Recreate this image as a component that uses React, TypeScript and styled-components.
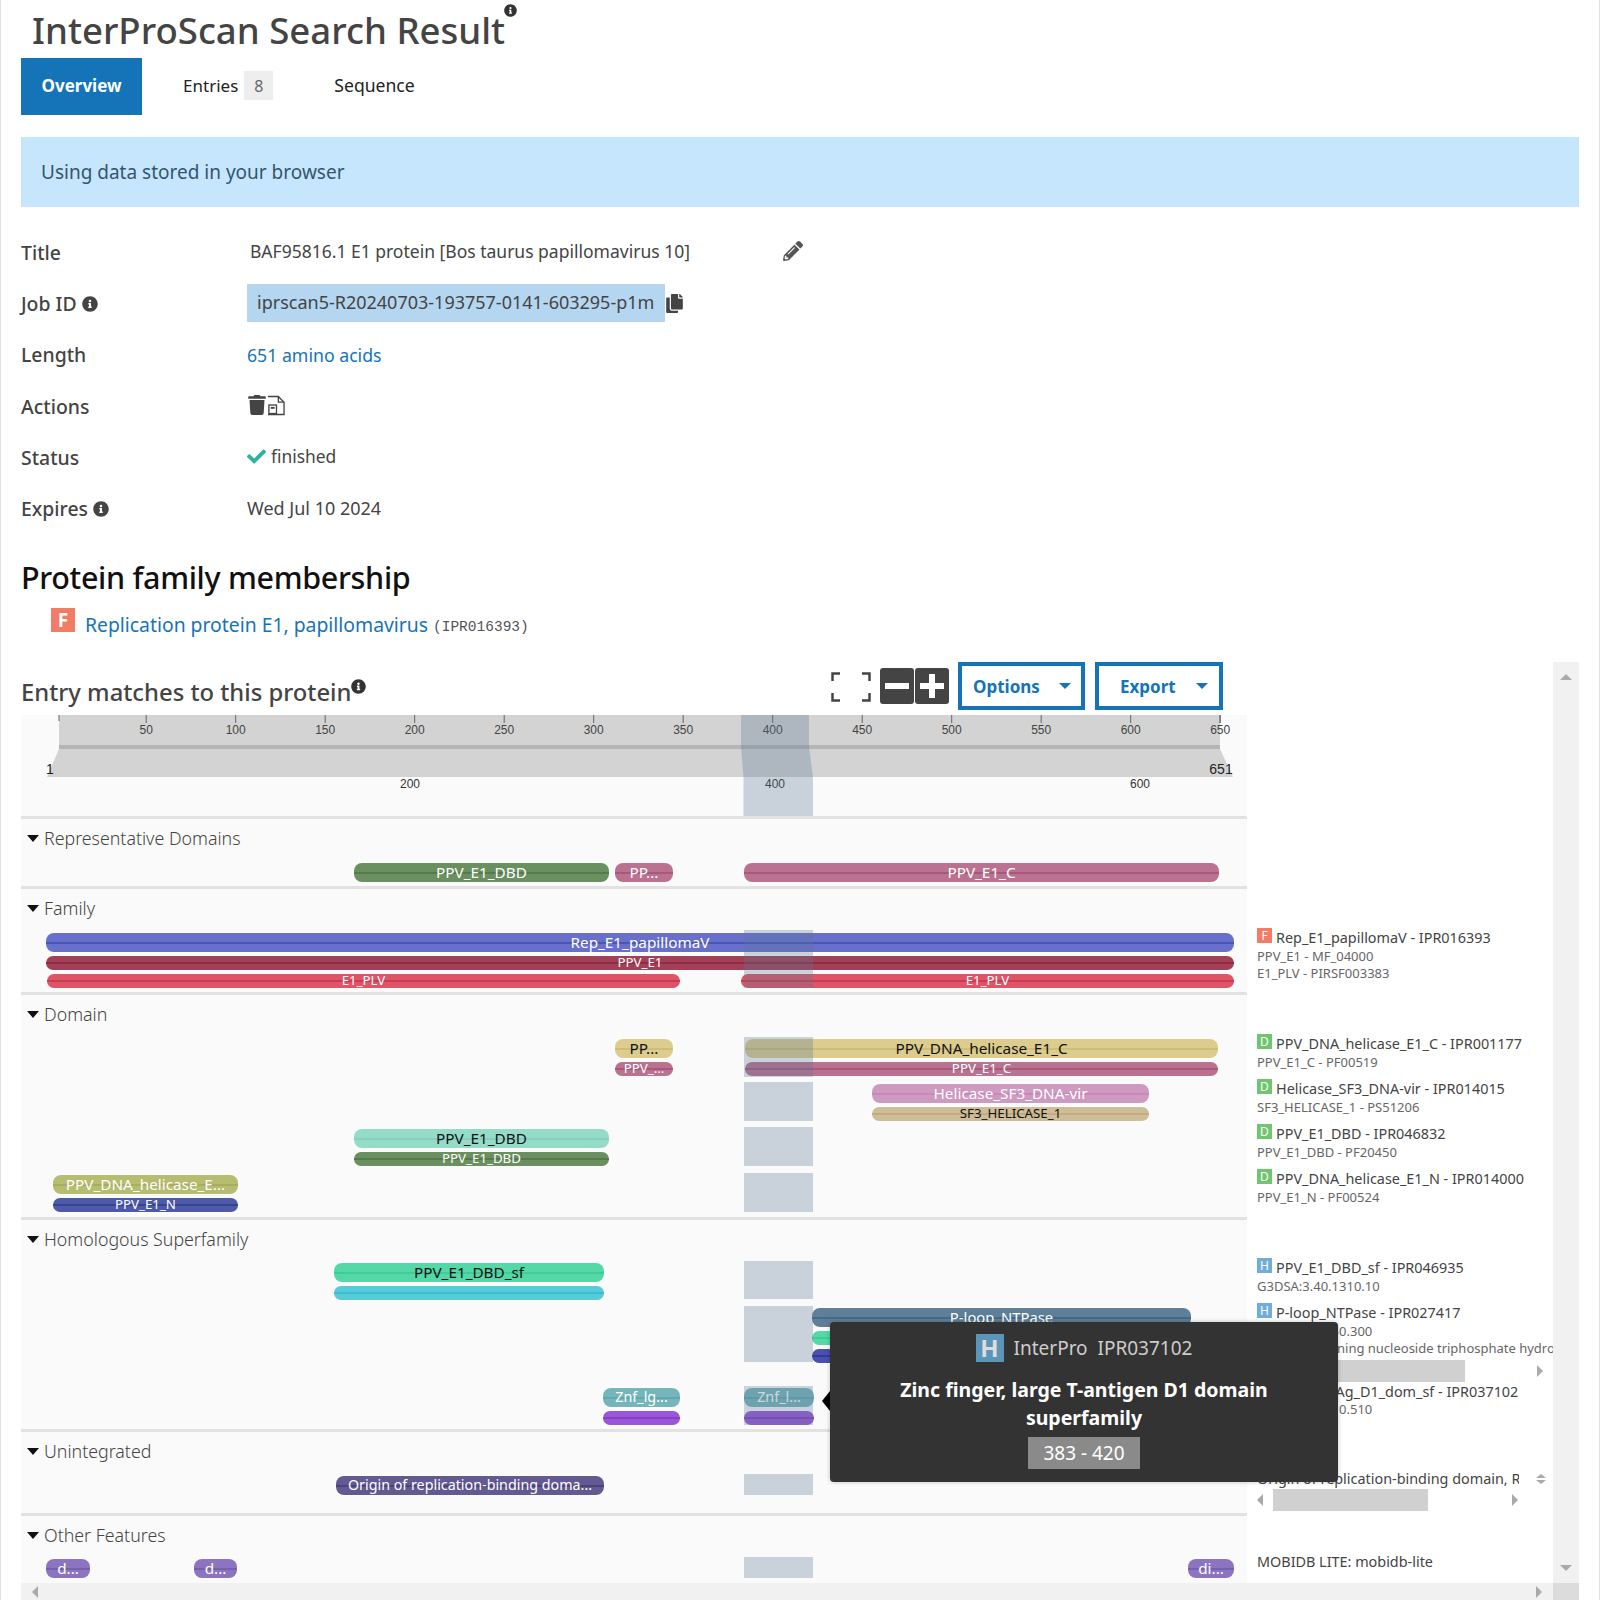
import React from 'react';
import { FaCheck, FaCopy, FaInfoCircle, FaPencilAlt, FaTrash } from 'react-icons/fa';
import styled, { createGlobalStyle } from 'styled-components';

const GlobalStyle = createGlobalStyle`
  html, body {
    margin: 0;
    padding: 0;
    background: #fff;
    overflow: hidden;
  }
  * {
    box-sizing: border-box;
  }
  body {
    font-family: 'Noto Sans', 'Open Sans', sans-serif;
    color: #444;
  }
`;

interface BarData {
  x0: number;
  x1: number;
  y: number;
  small?: boolean;
  color: string;
  line: string;
  text?: string;
  dark?: boolean;
  size?: number;
}

interface LabelData {
  badge?: string;
  lines: string[];
  scroll?: { left: number; width: number; total: number; gap: number; after: number; leftArrow?: boolean };
  stepper?: boolean;
}

interface SectionData {
  name: string;
  top: number;
  height: number;
  padTop: number;
  last?: boolean;
  bars: BarData[];
  blocks: [number, number][];
  labels: LabelData[];
}

const GREEN = { color: '#6a9060', line: '#557a4c' };
const ROSE = { color: '#bb7290', line: '#a8587a' };
const SAND = { color: '#dccd8e', line: '#cfbd78' };

const sections: SectionData[] = [
  {
    name: 'Representative Domains',
    top: 819,
    height: 70,
    padTop: 0,
    blocks: [],
    labels: [],
    bars: [
      { x0: 354, x1: 609, y: 862, ...GREEN, text: 'PPV_E1_DBD' },
      { x0: 615, x1: 673, y: 862, ...ROSE, text: 'PP...' },
      { x0: 744, x1: 1219, y: 862, ...ROSE, text: 'PPV_E1_C' },
    ],
  },
  {
    name: 'Family',
    top: 889,
    height: 106,
    padTop: 40,
    blocks: [[929, 987]],
    bars: [
      { x0: 46, x1: 1234, y: 932, color: '#6870cc', line: '#4a55bb', text: 'Rep_E1_papillomaV' },
      { x0: 46, x1: 1234, y: 955, small: true, color: '#a34058', line: '#8e2c46', text: 'PPV_E1' },
      { x0: 47, x1: 680, y: 973, small: true, color: '#dd5566', line: '#cc3c50', text: 'E1_PLV' },
      { x0: 741, x1: 1234, y: 973, small: true, color: '#dd5566', line: '#cc3c50', text: 'E1_PLV' },
    ],
    labels: [{ badge: 'F', lines: ['Rep_E1_papillomaV - IPR016393', 'PPV_E1 - MF_04000', 'E1_PLV - PIRSF003383'] }],
  },
  {
    name: 'Domain',
    top: 995,
    height: 225,
    padTop: 40,
    blocks: [[1036, 1076], [1081, 1120], [1126, 1165], [1172, 1211]],
    bars: [
      { x0: 615, x1: 673, y: 1038, ...SAND, text: 'PP...', dark: true },
      { x0: 615, x1: 673, y: 1061, small: true, ...ROSE, text: 'PPV_...' },
      { x0: 745, x1: 1218, y: 1038, ...SAND, text: 'PPV_DNA_helicase_E1_C', dark: true },
      { x0: 745, x1: 1218, y: 1061, small: true, ...ROSE, text: 'PPV_E1_C' },
      { x0: 872, x1: 1149, y: 1083, color: '#cf9ac2', line: '#c58ab6', text: 'Helicase_SF3_DNA-vir' },
      { x0: 872, x1: 1149, y: 1106, small: true, color: '#cfbd97', line: '#c2ad82', text: 'SF3_HELICASE_1', dark: true },
      { x0: 354, x1: 609, y: 1128, color: '#94dcc8', line: '#85d2bc', text: 'PPV_E1_DBD', dark: true },
      { x0: 354, x1: 609, y: 1151, small: true, ...GREEN, text: 'PPV_E1_DBD' },
      { x0: 53, x1: 238, y: 1174, color: '#b6bc70', line: '#a8ae5e', text: 'PPV_DNA_helicase_E...' },
      { x0: 53, x1: 238, y: 1197, small: true, color: '#4c5aa8', line: '#344394', text: 'PPV_E1_N' },
    ],
    labels: [
      { badge: 'D', lines: ['PPV_DNA_helicase_E1_C - IPR001177', 'PPV_E1_C - PF00519'] },
      { badge: 'D', lines: ['Helicase_SF3_DNA-vir - IPR014015', 'SF3_HELICASE_1 - PS51206'] },
      { badge: 'D', lines: ['PPV_E1_DBD - IPR046832', 'PPV_E1_DBD - PF20450'] },
      { badge: 'D', lines: ['PPV_DNA_helicase_E1_N - IPR014000', 'PPV_E1_N - PF00524'] },
    ],
  },
  {
    name: 'Homologous Superfamily',
    top: 1220,
    height: 212,
    padTop: 39,
    blocks: [[1260, 1298], [1305, 1361], [1385, 1424]],
    bars: [
      { x0: 334, x1: 604, y: 1262, color: '#55d8a8', line: '#42cc98', text: 'PPV_E1_DBD_sf', dark: true },
      { x0: 334, x1: 604, y: 1285, small: true, color: '#55ccd8', line: '#3cbed0' },
      { x0: 812, x1: 1191, y: 1307, color: '#5f7f99', line: '#446a88', text: 'P-loop_NTPase', size: 14.8 },
      { x0: 812, x1: 1000, y: 1330, small: true, color: '#55d8a8', line: '#42cc98' },
      { x0: 812, x1: 1000, y: 1348, small: true, color: '#4a50b0', line: '#343a9c' },
      { x0: 603, x1: 680, y: 1387, color: '#74b6bc', line: '#62a8ae', text: 'Znf_lg...', size: 14.4 },
      { x0: 603, x1: 680, y: 1410, small: true, color: '#9a55d8', line: '#8440c8' },
      { x0: 744, x1: 814, y: 1387, color: '#74b6bc', line: '#62a8ae', text: 'Znf_l...', size: 14.4 },
      { x0: 744, x1: 814, y: 1410, small: true, color: '#9a55d8', line: '#8440c8' },
    ],
    labels: [
      { badge: 'H', lines: ['PPV_E1_DBD_sf - IPR046935', 'G3DSA:3.40.1310.10'] },
      {
        badge: 'H',
        lines: ['P-loop_NTPase - IPR027417', 'G3DSA:3.40.50.300', 'P-loop containing nucleoside triphosphate hydrolase - SSF52540'],
        scroll: { left: 16, width: 192, total: 286, gap: 3, after: -9 },
      },
      { badge: 'H', lines: ['Znf_lg_T-Ag_D1_dom_sf - IPR037102', 'G3DSA:1.10.10.510'] },
    ],
  },
  {
    name: 'Unintegrated',
    top: 1432,
    height: 84,
    padTop: 38,
    blocks: [[1473, 1494]],
    bars: [
      { x0: 336, x1: 604, y: 1475, color: '#635a92', line: '#4c437e', text: 'Origin of replication-binding doma...', size: 14.3 },
    ],
    labels: [
      {
        lines: ['Origin of replication-binding domain, RBD-like'],
        stepper: true,
        scroll: { left: 16, width: 155, total: 261, gap: 1, after: 0, leftArrow: true },
      },
    ],
  },
  {
    name: 'Other Features',
    top: 1516,
    height: 67,
    padTop: 37,
    last: true,
    blocks: [[1556, 1577]],
    bars: [
      { x0: 46, x1: 90, y: 1558, color: '#8c74c0', line: '#7860ae', text: 'd...' },
      { x0: 194, x1: 237, y: 1558, color: '#8c74c0', line: '#7860ae', text: 'd...' },
      { x0: 1188, x1: 1234, y: 1558, color: '#8c74c0', line: '#7860ae', text: 'di...' },
    ],
    labels: [{ lines: ['MOBIDB LITE: mobidb-lite'] }],
  },
];

const rulerTicks = [50, 100, 150, 200, 250, 300, 350, 400, 450, 500, 550, 600, 650];

const Ruler = () => (
  <RulerBox>
    <svg width="1226" height="101" viewBox="0 0 1226 101">
      <rect x="38" y="0" width="1161" height="33" fill="#d3d3d3" />
      <rect x="38" y="30" width="1161" height="4" fill="#b5b5b5" />
      <path d="M38 34H1199L1212 62H26Z" fill="#d3d3d3" />
      {rulerTicks.map(n => {
        const x = 35.7 + n * 1.79;
        return (
          <g key={n}>
            <line x1={x} x2={x} y1="0" y2="8" stroke="#666" />
            <text x={x} y="19" textAnchor="middle" fontSize="12" fontFamily="Liberation Sans" fill="#444">
              {n}
            </text>
          </g>
        );
      })}
      <line x1="38" x2="38" y1="0" y2="6" stroke="#666" />
      <line x1="1199" x2="1199" y1="0" y2="8" stroke="#666" />
      <text x="29" y="59" textAnchor="middle" fontSize="14" fontFamily="Liberation Sans" fill="#222">
        1
      </text>
      <text x="1200" y="59" textAnchor="middle" fontSize="14" fontFamily="Liberation Sans" fill="#222">
        651
      </text>
      <text x="389" y="73" textAnchor="middle" fontSize="12" fontFamily="Liberation Sans" fill="#333">
        200
      </text>
      <text x="754" y="73" textAnchor="middle" fontSize="12" fontFamily="Liberation Sans" fill="#333">
        400
      </text>
      <text x="1119" y="73" textAnchor="middle" fontSize="12" fontFamily="Liberation Sans" fill="#333">
        600
      </text>
      <path d="M720 0H788V32L792 62V101H722.5V62L720 32Z" fill="rgba(90,120,145,.3)" />
    </svg>
  </RulerBox>
);

const Track = ({ section }: { section: SectionData }) => (
  <SectionRow $height={section.height}>
    <TrackCell $last={section.last}>
      <SectionName>
        <Caret />
        {section.name}
      </SectionName>
      {section.bars.map((b, i) => (
        <Bar
          key={i}
          $left={b.x0 - 21}
          $top={b.y - section.top + 1}
          $width={b.x1 - b.x0}
          $small={b.small}
          $color={b.color}
          $line={b.line}
          $dark={b.dark}
          $size={b.size}
        >
          <span>{b.text}</span>
        </Bar>
      ))}
      {section.blocks.map(([y0, y1]) => (
        <Block key={y0} $top={y0 - section.top + 1} $height={y1 - y0} />
      ))}
    </TrackCell>
    <LabelCell $padTop={section.padTop}>
      {section.labels.map((l, i) => (
        <LabelGroup key={i}>
          {l.lines.map((line, j) =>
            j === 0 ? (
              <MainLine key={j}>
                {l.badge && <Badge $type={l.badge}>{l.badge}</Badge>}
                <LineText $stepper={l.stepper}>{line}</LineText>
                {l.stepper && (
                  <Stepper>
                    <ArrowUp />
                    <ArrowDown />
                  </Stepper>
                )}
              </MainLine>
            ) : (
              <SubLine key={j}>{line}</SubLine>
            ),
          )}
          {l.scroll && (
            <LabelScroll $total={l.scroll.total} $gap={l.scroll.gap} $after={l.scroll.after}>
              <ArrowLeft $hide={!l.scroll.leftArrow} />
              <Thumb $left={l.scroll.left - 6} $width={l.scroll.width} />
              <ArrowRight />
            </LabelScroll>
          )}
        </LabelGroup>
      ))}
    </LabelCell>
  </SectionRow>
);

const App = () => {
  return (
    <Shell>
      <GlobalStyle />
      <PageTitle>
        InterProScan Search Result
        <TitleInfo />
      </PageTitle>
      <Tabs>
        <Tab $active>Overview</Tab>
        <EntriesTab>
          Entries <Count>8</Count>
        </EntriesTab>
        <SequenceTab>Sequence</SequenceTab>
      </Tabs>
      <Callout>Using data stored in your browser</Callout>
      <MetaGrid>
        <MetaRow>
          <MetaLabel>Title</MetaLabel>
          <TitleValue>
            <span>BAF95816.1 E1 protein [Bos taurus papillomavirus 10]</span>
            <PencilIcon />
          </TitleValue>
        </MetaRow>
        <MetaRow>
          <MetaLabel>
            Job ID <SmallInfo />
          </MetaLabel>
          <JobRow>
            <JobBox>iprscan5-R20240703-193757-0141-603295-p1m</JobBox>
            <CopyIcon />
          </JobRow>
        </MetaRow>
        <MetaRow>
          <MetaLabel>Length</MetaLabel>
          <LinkText>651 amino acids</LinkText>
        </MetaRow>
        <MetaRow>
          <MetaLabel>Actions</MetaLabel>
          <ActionIcons>
            <TrashIcon />
            <svg width="18" height="21" viewBox="0 0 19 21" fill="none" stroke="#444" strokeWidth="1.4">
              <path d="M1 1h11l6 6v13H1" />
              <path d="M12 1v6h6" />
              <rect x="2" y="10" width="8" height="9" fill="#fff" />
              <rect x="4" y="12" width="4" height="2" fill="#444" stroke="none" />
            </svg>
          </ActionIcons>
        </MetaRow>
        <MetaRow>
          <MetaLabel>Status</MetaLabel>
          <StatusRow>
            <CheckIcon />
            <span>finished</span>
          </StatusRow>
        </MetaRow>
        <MetaRow>
          <MetaLabel>
            Expires <SmallInfo />
          </MetaLabel>
          <ExpiresValue>Wed Jul 10 2024</ExpiresValue>
        </MetaRow>
      </MetaGrid>
      <SectionTitle>Protein family membership</SectionTitle>
      <FamilyRow>
        <FamilyBadge>F</FamilyBadge>
        <FamilyLink>Replication protein E1, papillomavirus</FamilyLink>
        <Accession>(IPR016393)</Accession>
      </FamilyRow>
      <Viewer>
        <ViewerBody>
          <ChartColumn>
            <Toolbar>
              <EntryTitle>
                Entry matches to this protein
                <SupInfo />
              </EntryTitle>
              <Controls>
                <FullscreenIcon width="40" height="30" viewBox="0 0 40 30" fill="none" stroke="#444" strokeWidth="2.5">
                  <path d="M9 1.5H1.5V9M31 1.5H38.5V9M9 28.5H1.5V21M31 28.5H38.5V21" />
                </FullscreenIcon>
                <ZoomGroup>
                  <ZoomButton>
                    <svg width="24" height="24" viewBox="0 0 24 24">
                      <rect x="0" y="9" width="24" height="6" fill="#fff" />
                    </svg>
                  </ZoomButton>
                  <ZoomButton>
                    <svg width="24" height="24" viewBox="0 0 24 24">
                      <path d="M9 0h6v9h9v6h-9v9H9v-9H0V9h9z" fill="#fff" />
                    </svg>
                  </ZoomButton>
                </ZoomGroup>
                <DropButton $width={127} $pad={11} $gap={19}>
                  Options <Drop />
                </DropButton>
                <DropButton $width={128} $pad={21} $gap={20} $spaced>
                  Export <Drop />
                </DropButton>
              </Controls>
            </Toolbar>
            <Ruler />
            {sections.map(s => (
              <Track key={s.name} section={s} />
            ))}
          </ChartColumn>
          <VScroll>
            <ArrowUp $big />
            <ArrowDown $big />
          </VScroll>
        </ViewerBody>
        <HScroll>
          <HTrack>
            <ArrowLeft />
            <ArrowRight />
          </HTrack>
          <Corner />
        </HScroll>
        <Tooltip>
          <TipArrow />
          <TipHead>
            <TipBadge>H</TipBadge>
            <span>InterPro&nbsp; IPR037102</span>
          </TipHead>
          <TipTitle>Zinc finger, large T-antigen D1 domain superfamily</TipTitle>
          <TipRange>383 - 420</TipRange>
        </Tooltip>
      </Viewer>
    </Shell>
  );
};

export default App;

const Shell = styled.div`
  width: 1600px;
  height: 1600px;
  overflow: hidden;
  padding: 0 20px;
  border-left: 1px solid #e2e2e2;
  border-right: 1px solid #e2e2e2;
`;

const PageTitle = styled.h1`
  position: relative;
  width: max-content;
  height: 58px;
  margin: 0;
  padding-left: 11px;
  font-size: 36.6px;
  line-height: 61px;
  font-weight: 500;
  color: #444;
`;

const TitleInfo = styled(FaInfoCircle)`
  position: absolute;
  right: -12px;
  top: 4px;
  font-size: 13px;
  color: #333;
`;

const Tabs = styled.div`
  display: flex;
  height: 57px;
`;

const Tab = styled.div<{ $active?: boolean }>`
  display: flex;
  align-items: center;
  padding: 0 ${p => (p.$active ? '20.5px' : '0')};
  padding-bottom: 2px;
  margin-left: ${p => (p.$active ? '0' : '60px')};
  background: ${p => (p.$active ? '#1574b8' : 'transparent')};
  color: ${p => (p.$active ? '#fff' : '#222')};
  font-weight: ${p => (p.$active ? 700 : 400)};
  font-size: 17px;
`;

const EntriesTab = styled(Tab)`
  margin-left: 41px;
  gap: 6px;
`;

const SequenceTab = styled(Tab)`
  margin-left: 61px;
  padding-bottom: 3px;
  font-size: 17.6px;
`;

const Count = styled.span`
  display: flex;
  align-items: center;
  justify-content: center;
  width: 29px;
  height: 29px;
  background: #eee;
  color: #666;
  font-size: 16px;
`;

const Callout = styled.div`
  display: flex;
  align-items: center;
  height: 70px;
  margin-top: 22px;
  padding-left: 20px;
  background: #c5e6fd;
  color: #33566e;
  font-size: 19px;
`;

const MetaGrid = styled.div`
  margin-top: 20px;
`;

const MetaRow = styled.div`
  display: grid;
  grid-template-columns: 226px 1fr;
  align-items: center;
  height: 51.2px;
  font-size: 17.7px;
  color: #444;
`;

const MetaLabel = styled.div`
  display: flex;
  align-items: center;
  gap: 5px;
  font-size: 19.4px;
  font-weight: 500;
`;

const SmallInfo = styled(FaInfoCircle)`
  font-size: 16px;
  color: #444;
`;

const TitleValue = styled.div`
  display: flex;
  align-items: center;
  justify-content: space-between;
  width: 556px;
  margin-bottom: 4px;
  padding-left: 3px;
  font-size: 17.5px;
`;

const PencilIcon = styled(FaPencilAlt)`
  font-size: 20px;
  color: #555;
`;

const JobRow = styled.div`
  display: flex;
  align-items: center;
  font-size: 18px;
`;

const JobBox = styled.div`
  width: 418px;
  height: 38px;
  margin-bottom: 2px;
  padding-left: 10px;
  line-height: 37px;
  background: #b5d6f0;
  white-space: nowrap;
`;

const CopyIcon = styled(FaCopy)`
  font-size: 19px;
  color: #444;
`;

const LinkText = styled.span`
  color: #1574b8;
`;

const ActionIcons = styled.div`
  display: flex;
  align-items: center;
  margin-bottom: 2px;
  color: #444;
`;

const TrashIcon = styled(FaTrash)`
  font-size: 20px;
`;

const StatusRow = styled.div`
  display: flex;
  align-items: center;
  gap: 5px;
  margin-bottom: 2px;
  font-size: 17.4px;
`;

const ExpiresValue = styled.span`
  margin-bottom: 2px;
  font-size: 18px;
`;

const CheckIcon = styled(FaCheck)`
  font-size: 19px;
  color: #2bb3a0;
`;

const SectionTitle = styled.h2`
  height: 48px;
  margin: 20px 0 0;
  font-size: 30.5px;
  line-height: 46px;
  letter-spacing: -0.32px;
  font-weight: 500;
  color: #111;
`;

const FamilyRow = styled.div`
  display: flex;
  align-items: center;
  height: 30px;
  margin: 6px 0 24px;
  padding-left: 30px;
`;

const FamilyBadge = styled.div`
  display: flex;
  align-items: center;
  justify-content: center;
  width: 24px;
  height: 24px;
  margin: 0 10px 6px 0;
  background: #f27c66;
  color: #fff;
  font-size: 19px;
  font-weight: 700;
`;

const FamilyLink = styled.span`
  margin-top: 2px;
  color: #1574b8;
  font-size: 19.35px;
`;

const Accession = styled.span`
  margin: 7px 0 0 5px;
  font-family: 'Liberation Mono', monospace;
  font-size: 14.5px;
  color: #555;
`;

const Viewer = styled.div`
  position: relative;
  display: flex;
  flex-direction: column;
  height: 938px;
`;

const ViewerBody = styled.div`
  display: flex;
  height: 921px;
`;

const ChartColumn = styled.div`
  width: 1532px;
  overflow: hidden;
`;

const Toolbar = styled.div`
  display: flex;
  justify-content: space-between;
  width: 1202px;
  height: 53px;
`;

const EntryTitle = styled.div`
  position: relative;
  height: 53px;
  font-size: 23.8px;
  line-height: 60px;
  font-weight: 500;
  color: #444;
`;

const SupInfo = styled(FaInfoCircle)`
  position: absolute;
  right: -15px;
  top: 17px;
  font-size: 15px;
  color: #333;
`;

const Controls = styled.div`
  display: flex;
  align-items: center;
  height: 48px;
`;

const FullscreenIcon = styled.svg`
  margin-top: 2px;
`;

const ZoomGroup = styled.div`
  display: flex;
  gap: 1px;
  margin: 0 9px 0 9px;
`;

const ZoomButton = styled.div`
  display: flex;
  align-items: center;
  justify-content: center;
  width: 34px;
  height: 36px;
  border-radius: 3px;
  background: #444;
`;

const DropButton = styled.div<{ $width: number; $pad: number; $gap: number; $spaced?: boolean }>`
  display: flex;
  align-items: center;
  gap: ${p => p.$gap}px;
  width: ${p => p.$width}px;
  height: 48px;
  margin-left: ${p => (p.$spaced ? '10px' : '0')};
  padding-left: ${p => p.$pad}px;
  border: 4px solid #1574b8;
  color: #1574b8;
  font-size: 17px;
  font-weight: 700;
`;

const Drop = styled.i`
  width: 0;
  height: 0;
  border-left: 6px solid transparent;
  border-right: 6px solid transparent;
  border-top: 6px solid #1574b8;
`;

const RulerBox = styled.div`
  width: 1226px;
  height: 104px;
  background: #fafafa;
  border-bottom: 3px solid #e2e2e2;
  svg {
    display: block;
  }
`;

const SectionRow = styled.div<{ $height: number }>`
  display: grid;
  grid-template-columns: 1226px 306px;
  height: ${p => p.$height}px;
`;

const TrackCell = styled.div<{ $last?: boolean }>`
  position: relative;
  background: #fafafa;
  border-bottom: ${p => (p.$last ? 'none' : '3px solid #e2e2e2')};
`;

const SectionName = styled.div`
  display: flex;
  align-items: center;
  gap: 5px;
  height: 38px;
  padding: 0 0 0 6px;
  font-size: 17.8px;
  font-weight: 300;
  color: #444;
`;

const Caret = styled.i`
  width: 0;
  height: 0;
  border-left: 6px solid transparent;
  border-right: 6px solid transparent;
  border-top: 7px solid #111;
`;

const Bar = styled.div<{
  $left: number;
  $top: number;
  $width: number;
  $small?: boolean;
  $color: string;
  $line: string;
  $dark?: boolean;
  $size?: number;
}>`
  position: absolute;
  left: ${p => p.$left}px;
  top: ${p => p.$top}px;
  width: ${p => p.$width}px;
  height: ${p => (p.$small ? 14 : 19)}px;
  border-radius: 8px;
  background: ${p => p.$color};
  box-shadow: 0 0 0 1px rgba(255, 255, 255, 0.5);
  color: ${p => (p.$dark ? '#111' : '#fff')};
  font-size: ${p => p.$size ?? (p.$small ? 13.3 : 15.3)}px;
  line-height: ${p => (p.$small ? 13 : 18)}px;
  text-align: center;
  white-space: nowrap;

  &::before {
    content: '';
    position: absolute;
    left: 0;
    right: 0;
    top: 50%;
    height: 2px;
    margin-top: -1px;
    background: ${p => p.$line};
  }

  span {
    position: relative;
  }
`;

const Block = styled.div<{ $top: number; $height: number }>`
  position: absolute;
  left: 722.5px;
  top: ${p => p.$top}px;
  width: 69.5px;
  height: ${p => p.$height}px;
  background: rgba(90, 120, 145, 0.3);
`;

const LabelCell = styled.div<{ $padTop: number }>`
  display: flex;
  flex-direction: column;
  gap: 10px;
  padding: ${p => p.$padTop}px 0 0 10px;
  overflow: hidden;
`;

const LabelGroup = styled.div`
  display: flex;
  flex-direction: column;
`;

const MainLine = styled.div`
  display: flex;
  align-items: center;
  gap: 4px;
  height: 17.5px;
  font-size: 14.4px;
  color: #444;
  white-space: nowrap;
`;

const LineText = styled.span<{ $stepper?: boolean }>`
  ${p => (p.$stepper ? 'display: block; width: 262px; overflow: hidden;' : '')}
`;

const SubLine = styled.div`
  height: 17.5px;
  font-size: 13px;
  line-height: 19px;
  color: #666;
  white-space: nowrap;
`;

const Badge = styled.span<{ $type: string }>`
  display: flex;
  align-items: center;
  justify-content: center;
  width: 15px;
  height: 15px;
  margin-top: -5px;
  background: ${p => (p.$type === 'F' ? '#f27c66' : p.$type === 'D' ? '#70c670' : '#70aed8')};
  color: #fff;
  font-size: 12px;
`;

const Stepper = styled.span`
  display: flex;
  flex-direction: column;
  gap: 2px;
  margin-left: 13px;
`;

const ArrowUp = styled.i<{ $big?: boolean }>`
  width: 0;
  height: 0;
  border-left: ${p => (p.$big ? 6 : 5)}px solid transparent;
  border-right: ${p => (p.$big ? 6 : 5)}px solid transparent;
  border-bottom: ${p => (p.$big ? 6 : 4)}px solid #aaa;
`;

const ArrowDown = styled(ArrowUp)`
  border-bottom: none;
  border-top: ${p => (p.$big ? 6 : 4)}px solid #aaa;
`;

const ArrowLeft = styled.i<{ $hide?: boolean }>`
  flex: none;
  width: 0;
  height: 0;
  visibility: ${p => (p.$hide ? 'hidden' : 'visible')};
  border-top: 6px solid transparent;
  border-bottom: 6px solid transparent;
  border-right: 6px solid #aaa;
`;

const ArrowRight = styled.i`
  flex: none;
  width: 0;
  height: 0;
  margin-left: auto;
  border-top: 6px solid transparent;
  border-bottom: 6px solid transparent;
  border-left: 6px solid #aaa;
`;

const LabelScroll = styled.div<{ $total: number; $gap: number; $after: number }>`
  display: flex;
  align-items: center;
  width: ${p => p.$total}px;
  height: 22px;
  margin-top: ${p => p.$gap}px;
  margin-bottom: ${p => p.$after}px;
`;

const Thumb = styled.div<{ $left: number; $width: number }>`
  width: ${p => p.$width}px;
  height: 22px;
  margin-left: ${p => p.$left}px;
  background: #d0d0d0;
`;

const VScroll = styled.div`
  display: flex;
  flex-direction: column;
  align-items: center;
  justify-content: space-between;
  width: 26px;
  padding: 12px 0 12px;
  background: #f1f1f1;
`;

const HScroll = styled.div`
  display: flex;
  height: 17px;
`;

const HTrack = styled.div`
  display: flex;
  align-items: center;
  width: 1532px;
  padding: 0 11px;
  background: #f1f1f1;
`;

const Corner = styled.div`
  width: 26px;
  background: #dcdcdc;
`;

const Tooltip = styled.div`
  position: absolute;
  left: 809px;
  top: 660px;
  width: 508px;
  height: 160px;
  padding-top: 12px;
  border-radius: 4px;
  background: #333;
  box-shadow: 0 0 4px rgba(0, 0, 0, 0.25);
  color: #fff;
  text-align: center;
`;

const TipArrow = styled.i`
  position: absolute;
  left: -8px;
  top: 69px;
  width: 0;
  height: 0;
  border-top: 10px solid transparent;
  border-bottom: 10px solid transparent;
  border-right: 8px solid #000;
`;

const TipHead = styled.div`
  display: flex;
  align-items: center;
  justify-content: center;
  gap: 10px;
  height: 28px;
  color: #ccc;
  font-size: 19px;
`;

const TipBadge = styled.span`
  width: 28px;
  height: 28px;
  background: #5b95b8;
  color: #ddd;
  font-size: 24px;
  line-height: 28px;
  font-weight: 700;
`;

const TipTitle = styled.div`
  width: 420px;
  margin: 14px auto 0;
  font-size: 19.5px;
  line-height: 28px;
  font-weight: 700;
`;

const TipRange = styled.div`
  width: 112px;
  height: 32px;
  margin: 5px auto 0;
  background: #8a8a8a;
  font-size: 19px;
  line-height: 32px;
`;
